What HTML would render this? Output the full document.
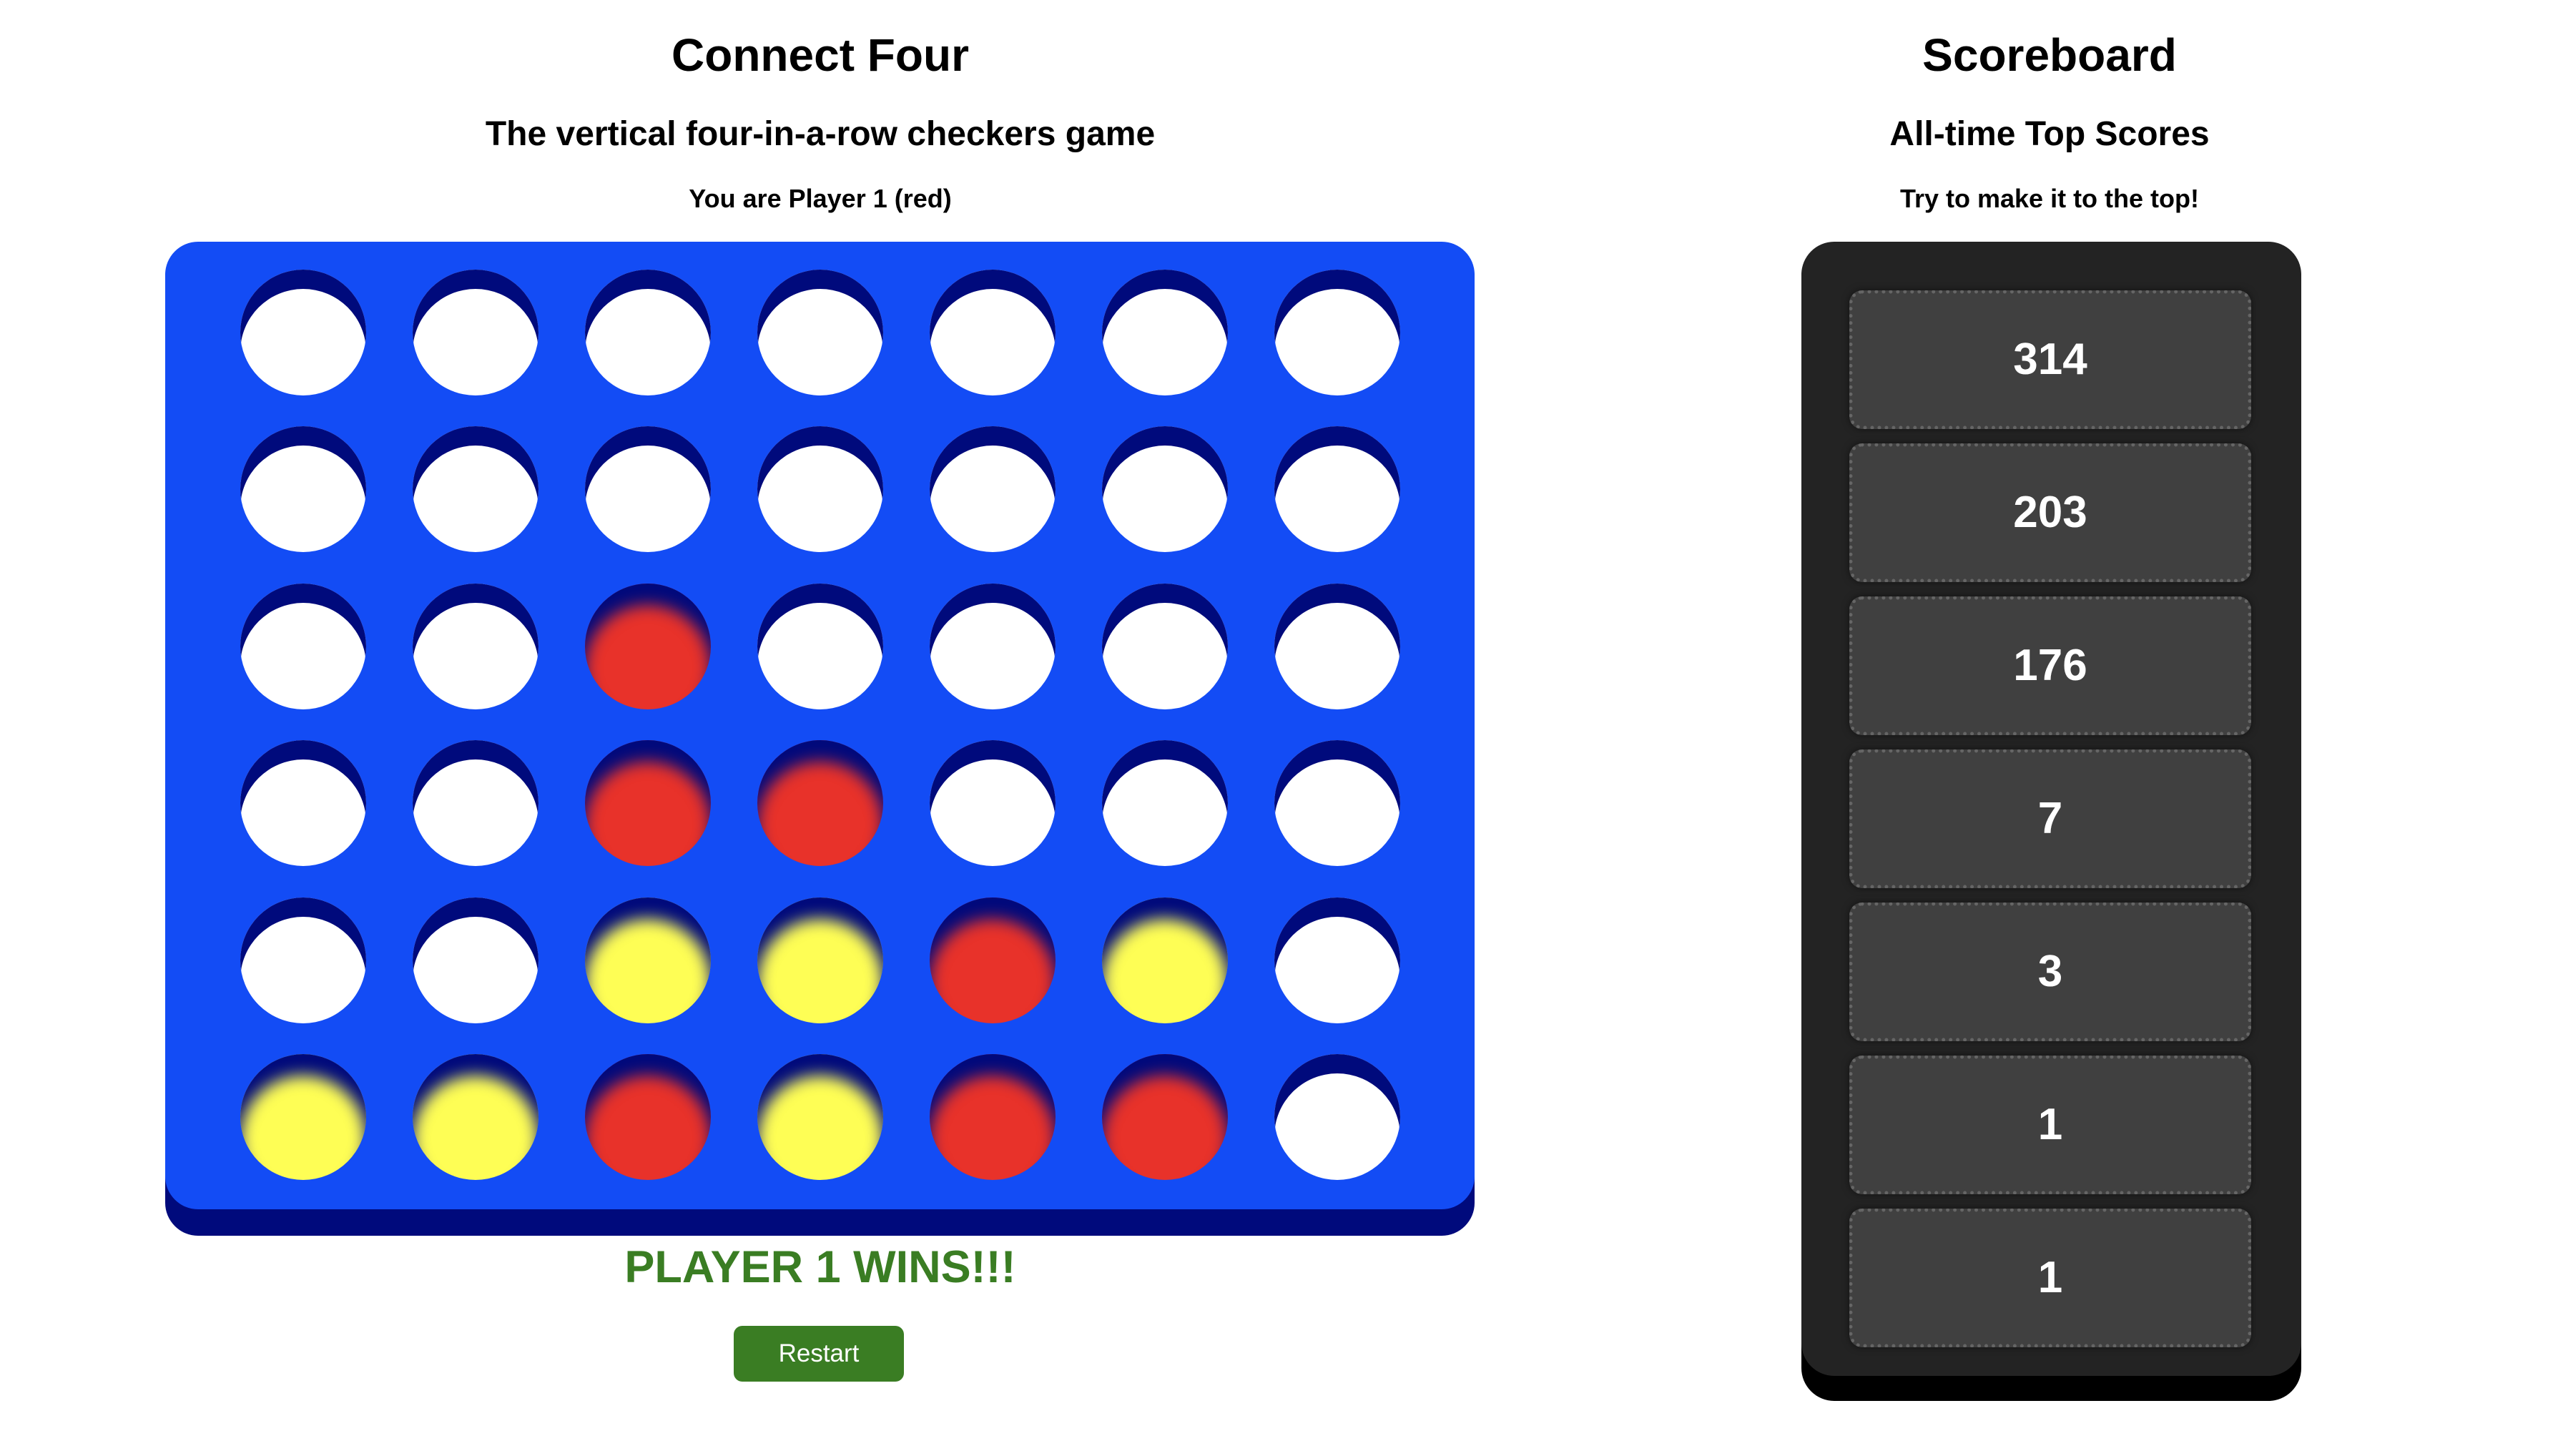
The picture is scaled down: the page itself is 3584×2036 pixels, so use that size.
<!DOCTYPE html>
<html><head><meta charset="utf-8"><style>
html,body{margin:0;padding:0;background:#fff;width:3584px;height:2036px;overflow:hidden;font-family:"Liberation Sans",Arial,sans-serif;}
.t{position:absolute;text-align:center;font-weight:bold;color:#000;white-space:nowrap;transform:translateX(-50%);}
#board{position:absolute;left:231px;top:338px;width:1831px;height:1353px;background:#134cf5;border-radius:46px;box-shadow:0 37px 0 #000a7c;}
.h{position:absolute;width:176px;height:176px;border-radius:50%;background:#fff;box-shadow:inset 0 27px 0 #000a7c;}
.h.r{background:#e8322a;box-shadow:inset 0 30px 22px #000a7c;}
.h.y{background:#fefe55;box-shadow:inset 0 30px 22px #000a7c;}
#sb{position:absolute;left:2519px;top:338px;width:699px;height:1586px;background:#232323;border-radius:46px;box-shadow:0 35px 0 #000;}
.s{position:absolute;left:67px;width:552px;height:184px;background:#404040;border:5px dotted #656565;border-radius:18px;box-shadow:0 0 10px rgba(0,0,0,.5);color:#fff;font-weight:bold;font-size:62px;line-height:184px;text-align:center;}
#btn{position:absolute;left:1026px;top:1854px;width:238px;height:78px;background:#3a7d23;border-radius:12px;color:#fff;font-size:35px;line-height:78px;text-align:center;}
</style></head><body>
<div class="t" style="left:1147px;top:40px;font-size:64px;">Connect Four</div>
<div class="t" style="left:1147px;top:160px;font-size:48px;">The vertical four-in-a-row checkers game</div>
<div class="t" style="left:1147px;top:257px;font-size:36px;">You are Player 1 (red)</div>
<div class="t" style="left:2866px;top:40px;font-size:64px;">Scoreboard</div>
<div class="t" style="left:2866px;top:160px;font-size:48px;">All-time Top Scores</div>
<div class="t" style="left:2866px;top:257px;font-size:36px;">Try to make it to the top!</div>
<div id="board"></div>
<div class="t" style="left:1147px;top:1736px;font-size:63px;color:#3a7d23;">PLAYER 1 WINS!!!</div>
<div id="btn">Restart</div>
<div id="sb">
<div class="s" style="top:68px">314</div>
<div class="s" style="top:282px">203</div>
<div class="s" style="top:496px">176</div>
<div class="s" style="top:710px">7</div>
<div class="s" style="top:924px">3</div>
<div class="s" style="top:1138px">1</div>
<div class="s" style="top:1352px">1</div>
</div>
<div style="position:absolute;left:0;top:0">
<div class="h" style="left:336px;top:377px"></div><div class="h" style="left:577px;top:377px"></div><div class="h" style="left:818px;top:377px"></div><div class="h" style="left:1059px;top:377px"></div><div class="h" style="left:1300px;top:377px"></div><div class="h" style="left:1541px;top:377px"></div><div class="h" style="left:1782px;top:377px"></div>
<div class="h" style="left:336px;top:596px"></div><div class="h" style="left:577px;top:596px"></div><div class="h" style="left:818px;top:596px"></div><div class="h" style="left:1059px;top:596px"></div><div class="h" style="left:1300px;top:596px"></div><div class="h" style="left:1541px;top:596px"></div><div class="h" style="left:1782px;top:596px"></div>
<div class="h" style="left:336px;top:816px"></div><div class="h" style="left:577px;top:816px"></div><div class="h r" style="left:818px;top:816px"></div><div class="h" style="left:1059px;top:816px"></div><div class="h" style="left:1300px;top:816px"></div><div class="h" style="left:1541px;top:816px"></div><div class="h" style="left:1782px;top:816px"></div>
<div class="h" style="left:336px;top:1035px"></div><div class="h" style="left:577px;top:1035px"></div><div class="h r" style="left:818px;top:1035px"></div><div class="h r" style="left:1059px;top:1035px"></div><div class="h" style="left:1300px;top:1035px"></div><div class="h" style="left:1541px;top:1035px"></div><div class="h" style="left:1782px;top:1035px"></div>
<div class="h" style="left:336px;top:1255px"></div><div class="h" style="left:577px;top:1255px"></div><div class="h y" style="left:818px;top:1255px"></div><div class="h y" style="left:1059px;top:1255px"></div><div class="h r" style="left:1300px;top:1255px"></div><div class="h y" style="left:1541px;top:1255px"></div><div class="h" style="left:1782px;top:1255px"></div>
<div class="h y" style="left:336px;top:1474px"></div><div class="h y" style="left:577px;top:1474px"></div><div class="h r" style="left:818px;top:1474px"></div><div class="h y" style="left:1059px;top:1474px"></div><div class="h r" style="left:1300px;top:1474px"></div><div class="h r" style="left:1541px;top:1474px"></div><div class="h" style="left:1782px;top:1474px"></div>
</div>
</body></html>
